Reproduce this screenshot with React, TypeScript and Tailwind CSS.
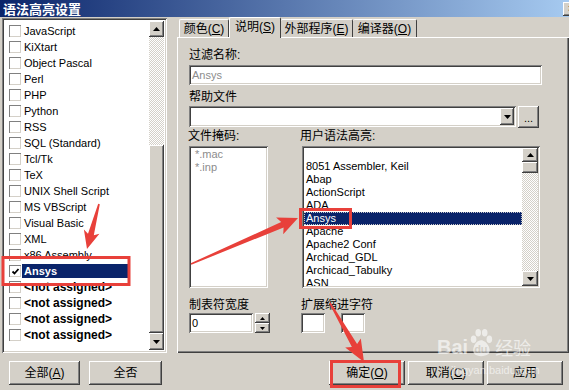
import React from "react";

const RAISED =
  "shadow-[inset_-1px_-1px_0_#404040,inset_1px_1px_0_#ffffff,inset_-2px_-2px_0_#808080,inset_2px_2px_0_#d4d0c8]";
const SUNKEN =
  "shadow-[inset_1px_1px_0_#808080,inset_-1px_-1px_0_#ffffff,inset_2px_2px_0_#404040,inset_-2px_-2px_0_#d4d0c8]";
const CHECKER =
  "[background-image:repeating-conic-gradient(#d4d0c8_0%_25%,#ffffff_0%_50%)] [background-size:2px_2px]";

function Tri({ down }: { down?: boolean }) {
  return (
    <svg width="7" height="4" viewBox="0 0 7 4">
      {down ? <polygon points="0,0 7,0 3.5,4" fill="#000" /> : <polygon points="3.5,0 7,4 0,4" fill="#000" />}
    </svg>
  );
}

function ScrollBtn({ down, h }: { down?: boolean; h: string }) {
  return (
    <div className={`${RAISED} ${h} w-full bg-[#d4d0c8] flex items-center justify-center shrink-0`}>
      <Tri down={down} />
    </div>
  );
}

function Check({ checked }: { checked?: boolean }) {
  return (
    <div className="w-[12px] h-[12px] bg-white shrink-0 shadow-[inset_1px_1px_0_#808080,inset_-1px_-1px_0_#d4d0c8] flex items-center justify-center">
      {checked && (
        <svg width="9" height="9" viewBox="0 0 9 9">
          <polyline points="1.5,4.5 3.5,6.5 7.5,2" fill="none" stroke="#000" strokeWidth="1.8" />
        </svg>
      )}
    </div>
  );
}

const leftItems = [
  "JavaScript",
  "KiXtart",
  "Object Pascal",
  "Perl",
  "PHP",
  "Python",
  "RSS",
  "SQL (Standard)",
  "Tcl/Tk",
  "TeX",
  "UNIX Shell Script",
  "MS VBScript",
  "Visual Basic",
  "XML",
  "x86 Assembly",
];

const userItems = [
  "8051 Assembler, Keil",
  "Abap",
  "ActionScript",
  "ADA",
  "Ansys",
  "Apache",
  "Apache2 Conf",
  "Archicad_GDL",
  "Archicad_Tabulky",
  "ASN",
];

function arrowPts(tx: number, ty: number, hx: number, hy: number, L: number, w1: number, w2: number) {
  const dx = hx - tx;
  const dy = hy - ty;
  const len = Math.hypot(dx, dy);
  const ux = dx / len;
  const uy = dy / len;
  const nx = -uy;
  const ny = ux;
  const bx = hx - ux * L;
  const by = hy - uy * L;
  const cx = hx - ux * (L + 3);
  const cy = hy - uy * (L + 3);
  const p = [
    [tx + nx * 0.8, ty + ny * 0.8],
    [bx + nx * w1, by + ny * w1],
    [cx + nx * w2, cy + ny * w2],
    [hx, hy],
    [cx - nx * w2, cy - ny * w2],
    [bx - nx * w1, by - ny * w1],
    [tx - nx * 0.8, ty - ny * 0.8],
  ];
  return p.map((q) => `${q[0].toFixed(1)},${q[1].toFixed(1)}`).join(" ");
}

function U({ children }: { children: React.ReactNode }) {
  return <span className="underline underline-offset-1">{children}</span>;
}

function Btn({ className, children }: { className: string; children: React.ReactNode }) {
  return (
    <div className={`${RAISED} ${className} h-[24px] bg-[#d4d0c8] flex items-center justify-center text-[12px] leading-[14px]`}>
      {children}
    </div>
  );
}

export default function App() {
  const red = "#e8403a";
  return (
    <div className="relative w-[569px] h-[390px] overflow-hidden bg-[#d4d0c8] text-black font-['Liberation_Sans','Noto_Sans_CJK_SC',sans-serif] text-[11px]">
      {/* title bar */}
      <div className="h-[17px] flex items-center bg-[linear-gradient(to_right,#0a246a,#a6caf0)]">
        <span className="pl-[3px] text-white font-bold text-[13px] leading-[17px] font-['Noto_Sans_CJK_SC',sans-serif]">
          语法高亮设置
        </span>
        <div className={`${RAISED} ml-auto mr-[-10px] w-[16px] h-[14px] bg-[#d4d0c8] flex items-center justify-center text-[11px] leading-none`}>
          ×
        </div>
      </div>

      <div className="flex">
        {/* left column */}
        <div className="w-[167px] pl-[2px] shrink-0 flex flex-col">
          <div className={`${SUNKEN} mt-[1px] h-[335px] w-[165px] bg-white p-[2px] flex`}>
            <div className="flex-1 pt-[3px] flex flex-col">
              {leftItems.map((t) => (
                <div key={t} className="h-[16px] flex items-center pl-[5px]">
                  <Check />
                  <span className="ml-[2px] px-[1px] leading-[14px] whitespace-nowrap">{t}</span>
                </div>
              ))}
              <div className="h-[16px] flex items-center pl-[5px]">
                <Check checked />
                <span className="ml-[1px] w-[106px] h-[14px] bg-[#0a246a] text-white font-bold leading-[14px] pl-[2px]">
                  Ansys
                </span>
              </div>
              {[0, 1, 2, 3].map((i) => (
                <div key={i} className="h-[16px] flex items-center pl-[5px]">
                  <Check />
                  <span className="ml-[2px] px-[1px] font-bold text-[12px] leading-[14px] whitespace-nowrap">
                    &lt;not assigned&gt;
                  </span>
                </div>
              ))}
            </div>
            <div className="w-[15px] py-[1px] flex flex-col">
              <ScrollBtn h="h-[16px]" />
              <div className={`${CHECKER} h-[108px]`} />
              <div className={`${RAISED} flex-1 bg-[#d4d0c8]`} />
              <ScrollBtn down h="h-[17px]" />
            </div>
            <div className="w-[1px]" />
          </div>
          <div className="mt-[8px] flex">
            <Btn className="ml-[7px] w-[71px]">
              全部(<U>A</U>)
            </Btn>
            <Btn className="ml-[9px] w-[73px]">全否</Btn>
          </div>
        </div>

        {/* right column */}
        <div className="ml-[10px] flex-1 flex flex-col">
          <div className="h-[20px] flex items-end pl-[2px] text-[12px]">
            <div className="w-[50px] h-[18px] border-t border-l border-white border-r border-r-[#404040] rounded-t-[2px] flex items-center justify-center leading-[14px]">
              颜色(<U>C</U>)
            </div>
            <div className="relative z-10 -mb-[1px] w-[52px] h-[21px] bg-[#d4d0c8] border-t border-l border-white border-r border-r-[#404040] rounded-t-[2px] flex items-start pt-[2px] justify-center leading-[14px]">
              说明(<U>S</U>)
            </div>
            <div className="w-[72px] h-[18px] border-t border-white border-r border-r-[#404040] rounded-t-[2px] flex items-center justify-center leading-[14px]">
              外部程序(<U>E</U>)
            </div>
            <div className="w-[64px] h-[18px] border-t border-white border-r border-r-[#404040] rounded-t-[2px] flex items-center justify-center leading-[14px]">
              编译器(<U>O</U>)
            </div>
          </div>

          <div className="h-[316px] shadow-[inset_1px_1px_0_#ffffff,inset_-1px_-1px_0_#404040,inset_-2px_-2px_0_#808080] pl-[12px] pt-[11px] flex flex-col">
            <div className="h-[14px] leading-[14px] text-[12px]">过滤名称:</div>
            <div className={`${SUNKEN} mt-[3px] h-[20px] w-[353px] bg-white flex items-center pl-[3px] text-[#8c8c8c]`}>
              Ansys
            </div>
            <div className="mt-[5px] h-[14px] leading-[14px] text-[12px]">帮助文件</div>
            <div className="mt-[2px] flex items-start">
              <div className={`${SUNKEN} h-[21px] w-[327px] bg-white p-[2px] flex justify-end`}>
                <div className={`${RAISED} w-[14px] h-full bg-[#d4d0c8] flex items-center justify-center`}>
                  <Tri down />
                </div>
              </div>
              <div className={`${RAISED} ml-[2px] w-[21px] h-[22px] bg-[#d4d0c8] flex items-end justify-center pb-[4px] text-[11px] leading-none`}>
                ...
              </div>
            </div>

            <div className="mt-[1px] flex">
              <div className="w-[112px] flex flex-col">
                <div className="-ml-[1px] h-[14px] leading-[14px] text-[12px]">文件掩码:</div>
                <div className={`${SUNKEN} mt-[3px] h-[142px] w-[79px] bg-white p-[2px] pl-[6px] text-[#8c8c8c]`}>
                  <div className="h-[13px] leading-[13px]">*.mac</div>
                  <div className="h-[13px] leading-[13px]">*.inp</div>
                </div>
                <div className="mt-[10px] h-[14px] leading-[14px] text-[12px]">制表符宽度</div>
                <div className="mt-[1px] flex">
                  <div className={`${SUNKEN} h-[20px] w-[64px] bg-white flex items-center pl-[3px]`}>0</div>
                  <div className="ml-[2px] w-[15px] h-[20px] flex flex-col">
                    <div className={`${RAISED} h-[10px] bg-[#d4d0c8] flex items-center justify-center`}>
                      <svg width="5" height="3" viewBox="0 0 5 3">
                        <polygon points="2.5,0 5,3 0,3" fill="#000" />
                      </svg>
                    </div>
                    <div className={`${RAISED} h-[10px] bg-[#d4d0c8] flex items-center justify-center`}>
                      <svg width="5" height="3" viewBox="0 0 5 3">
                        <polygon points="0,0 5,0 2.5,3" fill="#000" />
                      </svg>
                    </div>
                  </div>
                </div>
              </div>

              <div className="flex-1 flex flex-col">
                <div className="-ml-[1px] h-[14px] leading-[14px] text-[12px]">用户语法高亮:</div>
                <div className={`${SUNKEN} ml-[1px] mt-[3px] h-[142px] w-[238px] bg-white p-[2px] flex`}>
                  <div className="flex-1 pt-[12px] overflow-hidden">
                    {userItems.map((t) =>
                      t === "Ansys" ? (
                        <div
                          key={t}
                          className="h-[13px] leading-[11px] bg-[#0a246a] text-white pl-[1px] border border-dotted border-[#c8c8c8]"
                        >
                          {t}
                        </div>
                      ) : (
                        <div key={t} className="h-[13px] leading-[13px] pl-[2px] whitespace-nowrap">
                          {t}
                        </div>
                      )
                    )}
                  </div>
                  <div className="w-[16px] flex flex-col">
                    <ScrollBtn h="h-[14px]" />
                    <div className={`${RAISED} h-[11px] bg-[#d4d0c8]`} />
                    <div className={`${CHECKER} flex-1`} />
                    <ScrollBtn down h="h-[15px]" />
                  </div>
                </div>
                <div className="mt-[10px] h-[14px] leading-[14px] text-[12px]">扩展缩进字符</div>
                <div className="mt-[1px] flex gap-[16px]">
                  <div className={`${SUNKEN} h-[20px] w-[24px] bg-white`} />
                  <div className={`${SUNKEN} h-[20px] w-[24px] bg-white`} />
                </div>
              </div>
            </div>
          </div>

          <div className="mt-[8px] flex justify-end gap-[3px] pr-[6px]">
            <Btn className="w-[76px]">
              确定(<U>O</U>)
            </Btn>
            <Btn className="w-[76px]">
              取消(<U>C</U>)
            </Btn>
            <Btn className="w-[76px]">应用</Btn>
          </div>
        </div>
      </div>

      {/* Baidu watermark */}
      <div className="absolute left-[437px] top-[327px] pointer-events-none opacity-60 text-white">
        <div className="flex items-end">
          <span className="text-[20px] font-bold leading-[20px] font-['Liberation_Sans',sans-serif]">Bai</span>
          <div className="relative w-[26px] h-[30px]">
            <svg width="26" height="30" viewBox="0 0 28 32" className="absolute left-0 top-0">
              <ellipse cx="6" cy="13" rx="3" ry="4" fill="#fff" />
              <ellipse cx="11" cy="6" rx="3" ry="4" fill="#fff" />
              <ellipse cx="18" cy="6" rx="3" ry="4" fill="#fff" />
              <ellipse cx="23" cy="13" rx="3" ry="4" fill="#fff" />
              <path d="M14 14 C8 14 3 24 7 29 C10 32 18 32 22 29 C26 24 20 14 14 14 Z" fill="#fff" />
            </svg>
            <span className="absolute left-[6px] top-[17px] text-[11px] font-bold leading-[11px] text-[#d4d0c8]">du</span>
          </div>
          <span className="ml-[1px] text-[18px] leading-[20px] font-['Noto_Sans_CJK_SC',sans-serif]">经验</span>
        </div>
        <div className="ml-[14px] mt-[7px] text-[11px] leading-[12px] font-['Liberation_Sans',sans-serif]">
          jingyan.baidu.com
        </div>
      </div>

      {/* red annotations */}
      <svg className="absolute left-0 top-0 pointer-events-none" width="569" height="390" viewBox="0 0 569 390">
        <rect x="3" y="257.5" width="126" height="27" fill="none" stroke={red} strokeWidth="3" />
        <rect x="300.5" y="209.5" width="50" height="18" fill="none" stroke={red} strokeWidth="3" />
        <rect x="331.5" y="361.5" width="68" height="25" fill="none" stroke={red} strokeWidth="3" />
        <polygon points={arrowPts(99, 204, 87, 249, 15, 3, 8)} fill={red} />
        <polygon points={arrowPts(191, 264, 298, 218, 17, 3, 9)} fill={red} />
        <polygon points={arrowPts(330, 303, 364, 362, 19, 3, 9)} fill={red} />
      </svg>
    </div>
  );
}
